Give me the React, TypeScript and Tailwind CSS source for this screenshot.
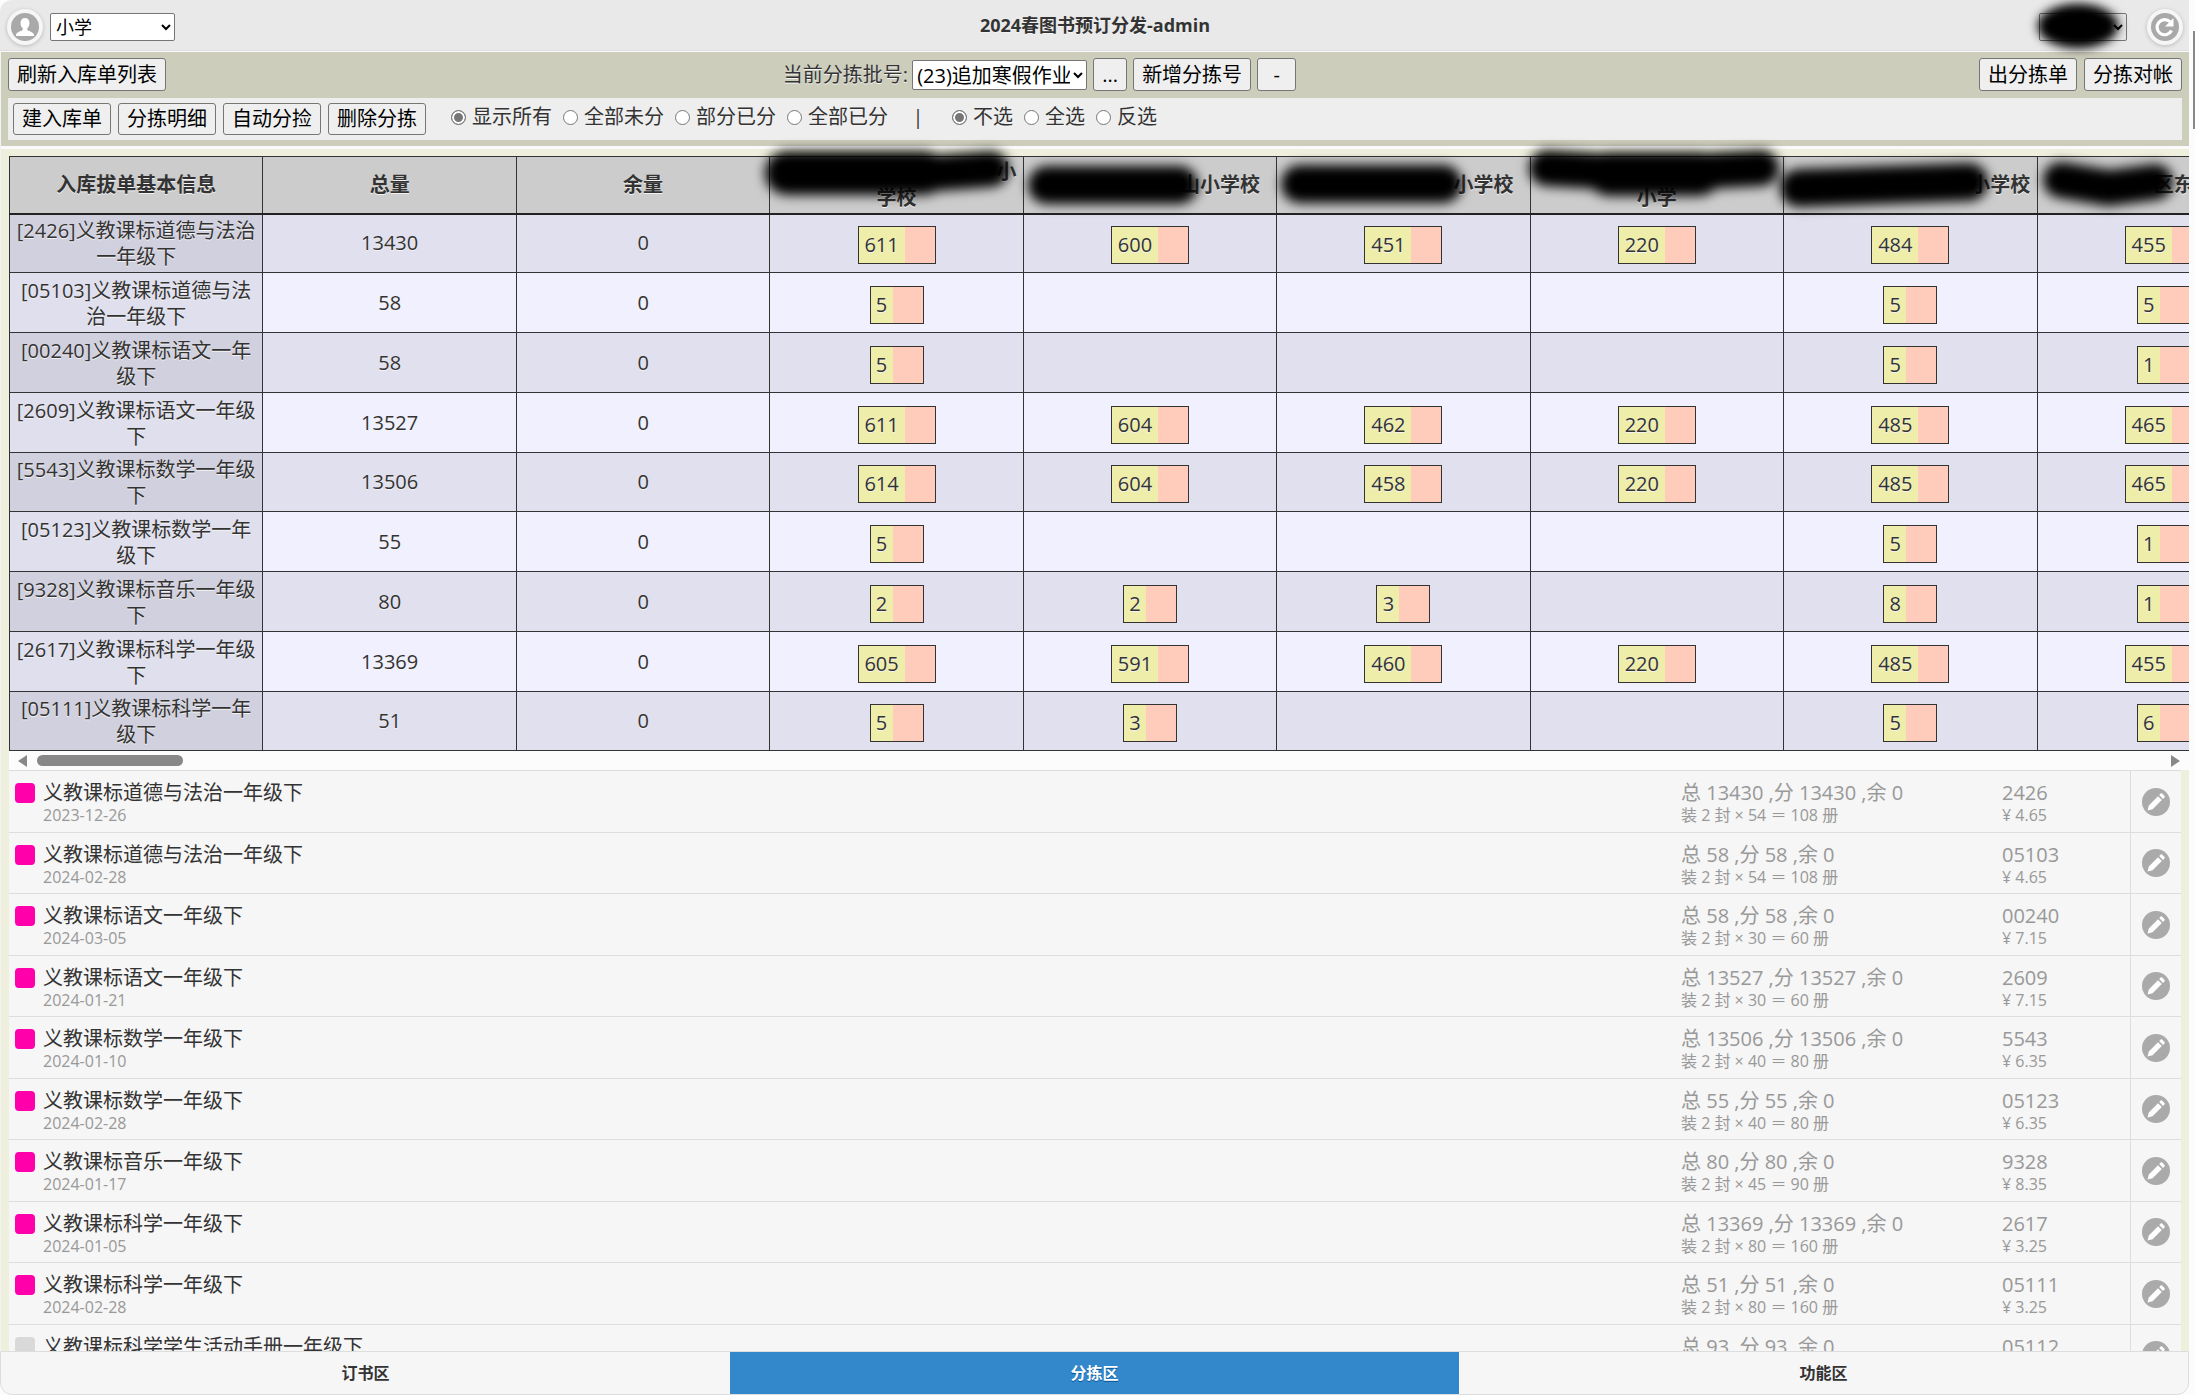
import React from 'react';

type Cell = number | null;

interface SortRow {
  name: string;
  total: number;
  rest: number;
  cells: Cell[];
}

interface Entry {
  title: string;
  date: string;
  total: number;
  seal: number;
  code: string;
  price: string;
  done?: boolean;
}

const ROWS: SortRow[] = [
  { name: '[2426]义教课标道德与法治一年级下', total: 13430, rest: 0, cells: [611, 600, 451, 220, 484, 455] },
  { name: '[05103]义教课标道德与法治一年级下', total: 58, rest: 0, cells: [5, null, null, null, 5, 5] },
  { name: '[00240]义教课标语文一年级下', total: 58, rest: 0, cells: [5, null, null, null, 5, 1] },
  { name: '[2609]义教课标语文一年级下', total: 13527, rest: 0, cells: [611, 604, 462, 220, 485, 465] },
  { name: '[5543]义教课标数学一年级下', total: 13506, rest: 0, cells: [614, 604, 458, 220, 485, 465] },
  { name: '[05123]义教课标数学一年级下', total: 55, rest: 0, cells: [5, null, null, null, 5, 1] },
  { name: '[9328]义教课标音乐一年级下', total: 80, rest: 0, cells: [2, 2, 3, null, 8, 1] },
  { name: '[2617]义教课标科学一年级下', total: 13369, rest: 0, cells: [605, 591, 460, 220, 485, 455] },
  { name: '[05111]义教课标科学一年级下', total: 51, rest: 0, cells: [5, 3, null, null, 5, 6] },
];

const ENTRIES: Entry[] = [
  { title: '义教课标道德与法治一年级下', date: '2023-12-26', total: 13430, seal: 54, code: '2426', price: '4.65', done: true },
  { title: '义教课标道德与法治一年级下', date: '2024-02-28', total: 58, seal: 54, code: '05103', price: '4.65', done: true },
  { title: '义教课标语文一年级下', date: '2024-03-05', total: 58, seal: 30, code: '00240', price: '7.15', done: true },
  { title: '义教课标语文一年级下', date: '2024-01-21', total: 13527, seal: 30, code: '2609', price: '7.15', done: true },
  { title: '义教课标数学一年级下', date: '2024-01-10', total: 13506, seal: 40, code: '5543', price: '6.35', done: true },
  { title: '义教课标数学一年级下', date: '2024-02-28', total: 55, seal: 40, code: '05123', price: '6.35', done: true },
  { title: '义教课标音乐一年级下', date: '2024-01-17', total: 80, seal: 45, code: '9328', price: '8.35', done: true },
  { title: '义教课标科学一年级下', date: '2024-01-05', total: 13369, seal: 80, code: '2617', price: '3.25', done: true },
  { title: '义教课标科学一年级下', date: '2024-02-28', total: 51, seal: 80, code: '05111', price: '3.25', done: true },
  { title: '义教课标科学学生活动手册一年级下', date: '2024-02-28', total: 93, seal: 80, code: '05112', price: '3.25' },
];

const SHOW_OPTIONS = ['显示所有', '全部未分', '部分已分', '全部已分'];
const PICK_OPTIONS = ['不选', '全选', '反选'];

const Button: React.FC<{ className?: string; children: React.ReactNode }> = ({ className = '', children }) => (
  <button
    type="button"
    className={`rounded-[3px] border border-[#767676] bg-[#efefef] px-2 text-center text-black hover:bg-[#e5e5e5] ${className}`}
  >
    {children}
  </button>
);

const RadioGroup: React.FC<{ name: string; options: string[] }> = ({ name, options }) => (
  <div className="flex gap-[11px]">
    {options.map((option, i) => (
      <label key={option} className="flex items-center gap-[6px]">
        <input
          type="radio"
          name={name}
          defaultChecked={i === 0}
          className="size-[15px] appearance-none rounded-full border border-[#767676] bg-white checked:bg-[#767676] checked:shadow-[inset_0_0_0_2px_#fff]"
        />
        {option}
      </label>
    ))}
  </div>
);

const RoundIcon: React.FC<{ label: string; children: React.ReactNode }> = ({ label, children }) => (
  <button type="button" aria-label={label} className="flex size-9 items-center justify-center rounded-full bg-[#f6f6f6] shadow-[0_1px_4px_rgba(0,0,0,0.2)]">
    <svg viewBox="0 0 28 28" className="size-7">
      <circle cx="14" cy="14" r="14" fill="#a9a9a9" />
      {children}
    </svg>
  </button>
);

// Two-part box: ordered quantity on the left, blank slot on the right
const Quantity: React.FC<{ value: number }> = ({ value }) => (
  <span className="mt-1 inline-flex h-[38px] border border-[#333] align-middle leading-9">
    <span className={value > 99 ? 'w-[46px] bg-[#eeeeaa]' : 'w-[22px] bg-[#eeeeaa]'}>{value}</span>
    <span className="w-[30px] bg-[#ffccbb]"></span>
  </span>
);

const Header = () => (
  <header className="flex h-[51px] shrink-0 items-center justify-between rounded-tl-xl border-b border-[#ddd] bg-[#e9e9e9] pt-1 pr-[6px] pl-[7px] text-lg">
    <div className="flex flex-1 items-center gap-[7px]">
      <RoundIcon label="用户">
        <path d="M14 5c-2.900 0-4.500 2.100-4.500 5 0 2.200.9 4.200 2.200 5.300v1.700c-.3 1-5.600 1.500-6.700 4.600V23h18v-1.400c-1.100-3.100-6.400-3.600-6.700-4.600v-1.700c1.300-1.100 2.200-3.100 2.200-5.300 0-2.900-1.600-5-4.500-5z" fill="#fff" />
      </RoundIcon>
      <select aria-label="学段" className="h-7 w-[125px] rounded-[2px] border border-[#767676] bg-white px-px leading-6 text-black">
        <option>小学</option>
      </select>
    </div>
    <h1 className="pb-1 font-bold">2024春图书预订分发-admin</h1>
    <div className="flex flex-1 items-center justify-end gap-5">
      <div className="relative">
        <select aria-label="操作员" className="h-7 w-[88px] rounded-[2px] border border-[#767676] bg-transparent leading-6 text-black">
          <option></option>
        </select>
        <div className="pointer-events-none absolute -top-2 left-0 z-10 h-[42px] w-[78px] rounded-[50%] bg-black shadow-[0_0_4px_1px_#000] blur-[5px]"></div>
      </div>
      <RoundIcon label="刷新">
        <path d="M20.500 17.500A7.600 7.600 0 1 1 19 8.700" fill="none" stroke="#fff" strokeWidth="3.200" />
        <path d="M22.500 5v8.500H14z" fill="#fff" />
      </RoundIcon>
    </div>
  </header>
);

const Toolbar = () => (
  <div className="shrink-0 border-t border-b-[3px] border-[#fafafa] bg-[#cccdbb] px-[7px] pt-[6px] pb-[6px]">
    <div className="flex items-center justify-between">
      <Button className="h-[33px]">刷新入库单列表</Button>
      <div className="flex items-center gap-[6px] pr-[66px]">
        <label className="flex items-center gap-1">
          当前分拣批号:
          <select className="h-[30px] w-[175px] rounded-[2px] border border-[#767676] bg-white leading-6 text-black">
            <option>(23)追加寒假作业</option>
          </select>
        </label>
        <Button className="h-[33px] w-[34px]">...</Button>
        <Button className="h-[33px]">新增分拣号</Button>
        <Button className="h-[33px] w-[39px]">-</Button>
      </div>
      <div className="flex gap-[7px]">
        <Button className="h-[33px]">出分拣单</Button>
        <Button className="h-[33px]">分拣对帐</Button>
      </div>
    </div>
    <div className="mt-[7px] flex h-[42px] items-center bg-[#eee] pl-[5px]">
      <div className="flex gap-[7px]">
        <Button className="h-8">建入库单</Button>
        <Button className="h-8">分拣明细</Button>
        <Button className="h-8">自动分捡</Button>
        <Button className="h-8">删除分拣</Button>
      </div>
      <div className="mb-1 ml-[25px] flex items-center">
        <RadioGroup name="show" options={SHOW_OPTIONS} />
        <span className="w-16 pr-1 text-center">|</span>
        <RadioGroup name="pick" options={PICK_OPTIONS} />
      </div>
    </div>
  </div>
);

// Black marker over the school names
const Marker = () => (
  <svg className="pointer-events-none absolute top-0 left-0 z-10 h-[60px] w-full overflow-visible" aria-hidden="true">
    <defs>
      <filter id="soft" filterUnits="userSpaceOnUse" x="0" y="-40" width="2200" height="140">
        <feGaussianBlur stdDeviation="6" />
      </filter>
    </defs>
    <g filter="url(#soft)" fill="none" stroke="#000" strokeLinecap="round" strokeLinejoin="round">
      <path d="M778 17H915" strokeWidth="44" />
      <path d="M915 18L982 13" strokeWidth="36" />
      <path d="M1038 29H1170" strokeWidth="38" />
      <path d="M1291 28H1434" strokeWidth="38" />
      <path d="M1538 12L1640 18L1752 12" strokeWidth="36" />
      <path d="M1600 18H1690" strokeWidth="44" />
      <path d="M1790 32L1960 26" strokeWidth="38" />
      <path d="M2052 24L2100 32L2146 26" strokeWidth="36" />
    </g>
  </svg>
);

const SortTable = () => (
  <div className="relative">
    <div className="overflow-hidden">
      <table className="w-[2282px] table-fixed border-collapse text-center [&_td]:border [&_td]:border-[#333] [&_th]:border [&_th]:border-[#333]">
        <thead className="border-b-2 border-[#222]">
          <tr className="h-[57px] bg-[#ccc]">
            <th>入库拔单基本信息</th>
            <th>总量</th>
            <th>余量</th>
            <th><span className="inline-block w-[220px]"></span>小<br />学校</th>
            <th><span className="inline-block w-[140px]"></span>山小学校</th>
            <th><span className="inline-block w-[160px]"></span>小学校</th>
            <th><span className="inline-block h-5 w-[240px]"></span><br />小学</th>
            <th><span className="inline-block w-[180px]"></span>小学校</th>
            <th><span className="inline-block w-[100px]"></span>区东<span className="inline-block w-[80px]"></span></th>
          </tr>
        </thead>
        <tbody>
          {ROWS.map(row => (
            <tr key={row.name} className="h-[60px] odd:bg-[#e1e0ee] even:bg-[#f0f0ff] [&:nth-child(4n+1)]:h-[59px]">
              <td className="bg-[#000010]/7 px-1 pt-[2px]">{row.name}</td>
              <td>{row.total}</td>
              <td>{row.rest}</td>
              {row.cells.map((value, i) => (
                <td key={i}>{value !== null && <Quantity value={value} />}</td>
              ))}
            </tr>
          ))}
        </tbody>
      </table>
    </div>
    <Marker />
    {/* Horizontal scroll track */}
    <div className="flex h-[19px] items-center justify-between bg-[#fcfcfc] px-[9px]">
      <div className="flex items-center gap-[10px]">
        <svg viewBox="0 0 9 12" className="h-3 w-[9px]"><path d="M9 0v12L0 6z" fill="#888" /></svg>
        <div className="h-[11px] w-[146px] rounded-full bg-[#888]"></div>
      </div>
      <svg viewBox="0 0 9 12" className="h-3 w-[9px]"><path d="M0 0v12l9-6z" fill="#888" /></svg>
    </div>
  </div>
);

const EntryRow: React.FC<{ entry: Entry }> = ({ entry }) => (
  <li className="flex border-t border-[#ddd] bg-[#f6f6f6] odd:h-[62px] even:h-[61px]">
    <div className="flex flex-1 gap-2 pt-[9px] pl-[6px]">
      <span className={entry.done ? 'mt-[3px] size-5 rounded-[4px] bg-[#ff00aa]' : 'mt-[3px] size-5 rounded-[4px] bg-[#d9d9d9]'}></span>
      <div>
        <p>{entry.title}</p>
        <p className="text-base leading-[18px] text-[#999]">{entry.date}</p>
      </div>
    </div>
    <div className="w-[321px] pt-[9px] text-[#999]">
      <p>总 {entry.total} ,分 {entry.total} ,余 0</p>
      <p className="text-base leading-[18px]">装 2 封 × {entry.seal} ＝ {entry.seal * 2} 册</p>
    </div>
    <div className="w-[128px] pt-[9px] text-[#999]">
      <p>{entry.code}</p>
      <p className="text-base leading-[18px]">¥ {entry.price}</p>
    </div>
    <button type="button" aria-label={`编辑 ${entry.code}`} className="flex w-[51px] items-center justify-center border-l border-[#ddd]">
      <svg viewBox="0 0 28 28" className="size-7">
        <circle cx="14" cy="14" r="14" fill="#aaa" />
        <path d="M5.500 22.500l1.300-5L16 8.300l3.800 3.700-9.200 9.200zM17.200 7.100l1.500-1.500c.4-.4 1-.4 1.400 0l2.400 2.400c.4.400.4 1 0 1.400L21 10.900z" fill="#fff" />
      </svg>
    </button>
  </li>
);

const TABS = ['订书区', '分拣区', '功能区'];

const App = () => (
  <div className="flex h-screen bg-[#fcfcfc] font-['Open_Sans','Noto_Sans_CJK_SC',sans-serif] text-xl leading-[26px] text-[#333] [text-shadow:0_1px_0_#f3f3f3]">
    <div className="flex min-w-0 flex-1 flex-col">
      <Header />
      <div className="flex min-h-0 flex-1 flex-col border-l border-[#f3f3f3] bg-[#eeefdd]">
        <Toolbar />
        {/* Pulled up a little so the marker can spill over the toolbar edge */}
        <main className="-mt-3 min-h-0 flex-1 overflow-hidden pt-[19px] pl-2">
          <SortTable />
          <ul className="mr-2">
            {ENTRIES.map(entry => (
              <EntryRow key={entry.code} entry={entry} />
            ))}
          </ul>
        </main>
      </div>
      <nav className="grid h-11 shrink-0 grid-cols-3 overflow-hidden rounded-b-xl border border-[#ddd] bg-[#f6f6f6] text-base font-bold">
        {TABS.map(tab => (
          <a
            key={tab}
            href="#"
            className={
              tab === '分拣区'
                ? 'flex items-center justify-center bg-[#3388cc] text-white [text-shadow:0_1px_0_#005599]'
                : 'flex items-center justify-center'
            }
          >
            {tab}
          </a>
        ))}
      </nav>
    </div>
    {/* Page scroll track */}
    <div className="flex w-[6px] justify-end pt-[31px]">
      <div className="h-[98px] w-[2px] bg-[#888]"></div>
    </div>
  </div>
);

export default App;
